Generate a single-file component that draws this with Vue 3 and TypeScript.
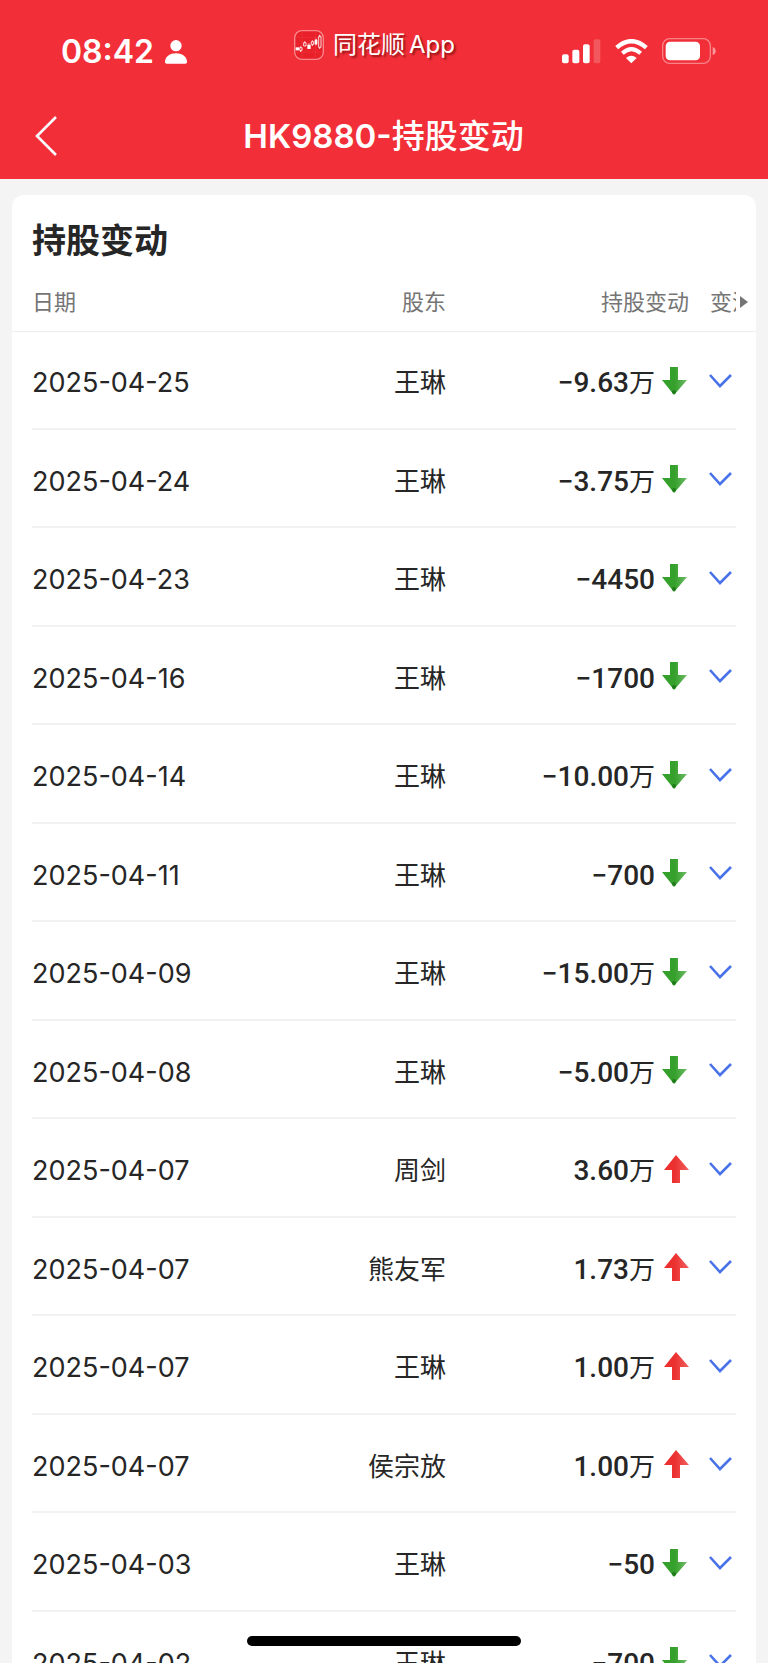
<script setup lang="ts">
interface HoldingChange {
  date: string
  holder: string
  amount: string
  unit: string
  direction: 'up' | 'down'
}

function change(date: string, holder: string, amount: string, unit: string, direction: 'up' | 'down'): HoldingChange {
  return { date, holder, amount, unit, direction }
}

const changes: HoldingChange[] = [
  change('2025-04-25', '王琳', '−9.63', '万', 'down'),
  change('2025-04-24', '王琳', '−3.75', '万', 'down'),
  change('2025-04-23', '王琳', '−4450', '', 'down'),
  change('2025-04-16', '王琳', '−1700', '', 'down'),
  change('2025-04-14', '王琳', '−10.00', '万', 'down'),
  change('2025-04-11', '王琳', '−700', '', 'down'),
  change('2025-04-09', '王琳', '−15.00', '万', 'down'),
  change('2025-04-08', '王琳', '−5.00', '万', 'down'),
  change('2025-04-07', '周剑', '3.60', '万', 'up'),
  change('2025-04-07', '熊友军', '1.73', '万', 'up'),
  change('2025-04-07', '王琳', '1.00', '万', 'up'),
  change('2025-04-07', '侯宗放', '1.00', '万', 'up'),
  change('2025-04-03', '王琳', '−50', '', 'down'),
  change('2025-04-02', '王琳', '−700', '', 'down'),
]
</script>

<template>
  <div class="page">
    <header class="top">
      <div class="status">
        <div class="clock">
          <span>08:42</span>
          <svg width="22" height="24" viewBox="0 0 66 72" fill="#fff" aria-hidden="true">
            <circle cx="33" cy="17" r="17" />
            <path d="M0 66C0 49 16 40 33 40s33 9 33 26c0 4-2 5-5 5H5c-3 0-5-1-5-5z" />
          </svg>
        </div>
        <div class="brand">
          <svg width="30" height="30" viewBox="0 0 90 90" aria-hidden="true">
            <rect x="2" y="2" width="86" height="86" rx="22" fill="#e8202a" stroke="#f9878b" stroke-width="4" />
            <path d="M4 22h82M4 66h82M24 4v82M64 4v82" stroke="#f03a42" stroke-width="1.5" />
            <g fill="#fff">
              <rect x="5" y="52" width="10" height="9" />
              <rect x="40" y="44" width="10" height="13" />
              <rect x="62" y="29" width="8" height="14" />
            </g>
            <g fill="none" stroke="#fff" stroke-width="2.5">
              <path d="M17 53h7v8h-7zM20 49v4M20 61v5" />
              <path d="M29 38h7v10h-7zM32 34v4" />
              <path d="M52 35h7v8h-7zM55 31v4M55 43v5" />
              <path d="M74 19h7v33h-7zM77 14v5M77 52v5M45 40v4M66 26v20" />
            </g>
          </svg>
          <span class="brand-name">同花顺<span class="brand-suffix">App</span></span>
        </div>
        <div class="signals">
          <svg width="39" height="25" viewBox="0 0 117 75" fill="#fff" aria-hidden="true">
            <rect x="0" y="46" width="20" height="27" rx="6" />
            <rect x="31" y="32" width="21" height="41" rx="6" />
            <rect x="63" y="16" width="20" height="57" rx="6" />
            <rect x="95" y="1" width="20" height="72" rx="6" opacity=".2" />
          </svg>
          <svg width="33" height="25" viewBox="0 0 99 75" aria-hidden="true">
            <path d="M5 26Q49-13 94 26" fill="none" stroke="#fff" stroke-width="13" />
            <path d="M22 43Q49 18 77 43" fill="none" stroke="#fff" stroke-width="12" />
            <path d="M33 57Q49 44 65 57L49 73z" fill="#fff" />
          </svg>
          <svg width="54" height="26" viewBox="0 0 162 78" aria-hidden="true">
            <rect x="2" y="2" width="143" height="74" rx="21" fill="none" stroke="#fff" stroke-opacity=".4" stroke-width="4" />
            <rect x="11" y="11" width="103" height="56" rx="13" fill="#fff" />
            <path d="M152 27q9 3 9 12t-9 12z" fill="#fff" fill-opacity=".5" />
          </svg>
        </div>
      </div>
      <div class="nav">
        <button class="back" type="button" aria-label="返回">
          <svg width="22" height="40" viewBox="0 0 22 40" fill="none" stroke="#fff" stroke-width="2.6" aria-hidden="true">
            <path d="M21 1L2 20L21 39" />
          </svg>
        </button>
        <h1><span class="code">HK9880-</span>持股变动</h1>
      </div>
    </header>

    <main class="content">
      <section class="card">
        <h2>持股变动</h2>
        <table>
          <colgroup>
            <col />
            <col />
            <col class="col-change" />
            <col class="col-more" />
          </colgroup>
          <thead>
            <tr>
              <th class="date" scope="col">日期</th>
              <th scope="col">股东</th>
              <th scope="col">持股变动</th>
              <th class="more" scope="col">
                <div class="more-head">
                  <span class="clipped">变流</span>
                  <svg width="8" height="12" viewBox="0 0 8 12" fill="#757575" aria-hidden="true">
                    <path d="M0 0L8 6L0 12z" />
                  </svg>
                </div>
              </th>
            </tr>
          </thead>
          <tbody>
            <tr v-for="(row, index) in changes" :key="index">
              <td class="date">{{ row.date }}</td>
              <td class="holder">{{ row.holder }}</td>
              <td>
                <div class="change">
                  <span class="amount">{{ row.amount }}<span class="unit">{{ row.unit }}</span></span>
                  <svg v-if="row.direction === 'down'" width="27" height="28" viewBox="0 0 27 28" aria-hidden="true">
                    <defs>
                      <linearGradient id="fall" x1="0" y1="0" x2="1" y2="0">
                        <stop offset=".5" stop-color="#35a02b" />
                        <stop offset="1" stop-color="#6dbb66" />
                      </linearGradient>
                    </defs>
                    <path d="M8 0h8v13h9L12 28L0 13h8z" fill="url(#fall)" />
                    <circle cx="12" cy="25" r="2" fill="#207a1c" />
                  </svg>
                  <svg v-else width="27" height="28" viewBox="0 0 27 28" aria-hidden="true">
                    <defs>
                      <linearGradient id="rise" x1="0" y1="0" x2="1" y2="0">
                        <stop offset=".4" stop-color="#ec2f2f" />
                        <stop offset="1" stop-color="#f0605f" />
                      </linearGradient>
                    </defs>
                    <path d="M14 0L27 15h-9v13h-8V15H2z" fill="url(#rise)" />
                  </svg>
                </div>
              </td>
              <td class="more">
                <button class="expand" type="button" aria-label="展开">
                  <svg width="24" height="14" viewBox="0 0 24 14" fill="none" stroke="#4a72e8" stroke-width="2.6" aria-hidden="true">
                    <path d="M1 1L11 12L22 1" />
                  </svg>
                </button>
              </td>
            </tr>
          </tbody>
        </table>
      </section>
    </main>
    <div class="home-indicator"></div>
  </div>
</template>

<style>
body {
  margin: 0;
}
</style>

<style scoped>
.page {
  position: relative;
  display: flex;
  flex-direction: column;
  height: 100vh;
  overflow: hidden;
  background: #f4f4f4;
  color: #262626;
  font-family: Inter, "Noto Sans CJK SC", sans-serif;
}

svg {
  display: block;
  flex: none;
}

button {
  display: block;
  margin: 0;
  padding: 0;
  border: 0;
  background: none;
}

.top {
  flex: none;
  background: #f22f38;
  color: #fff;
}

.status {
  display: flex;
  align-items: center;
  justify-content: space-between;
  box-sizing: border-box;
  height: 94px;
  padding: 8px 52px 0 61px;
}

.clock {
  display: flex;
  align-items: center;
  gap: 11px;
  padding-top: 1px;
  font-size: 32px;
  font-weight: 600;
  line-height: 40px;
}

.brand {
  display: flex;
  align-items: center;
  gap: 9px;
  padding-bottom: 12px;
  font-size: 24px;
  line-height: 30px;
  text-shadow: 2px 2px 2px rgba(90, 0, 0, 0.6);
}

.brand-suffix {
  margin-left: 4px;
}

.signals {
  display: flex;
  align-items: center;
  gap: 14px;
}

.nav {
  display: grid;
  grid-template-columns: 1fr auto 1fr;
  align-items: center;
  height: 83px;
  padding: 0 36px 2px 35px;
}

.back {
  justify-self: start;
}

h1 {
  grid-column: 2;
  margin: 0;
  font-size: 33px;
  font-weight: 500;
  line-height: 40px;
}

.code {
  font-weight: 600;
}

.content {
  flex: 1;
  min-height: 0;
  overflow: hidden;
  padding: 16px 12px 0;
}

.card {
  overflow: hidden;
  border-radius: 12px;
  background: #fff;
}

h2 {
  margin: 0;
  padding: 26px 20px 0;
  font-size: 34px;
  font-weight: 700;
  line-height: 40px;
}

table {
  width: 100%;
  border-collapse: collapse;
  table-layout: fixed;
}

.col-change {
  width: 243px;
}

.col-more {
  width: 67px;
}

th {
  height: 70px;
  padding: 12px 0 0;
  box-sizing: border-box;
  border-bottom: 1px solid #ededed;
  color: #757575;
  font-size: 22px;
  font-weight: 400;
  line-height: 30px;
  text-align: right;
}

tbody tr {
  height: 98px;
  background: linear-gradient(#f2f2f2, #f2f2f2) bottom / calc(100% - 40px) 2px no-repeat;
}

tbody tr:nth-child(odd) {
  height: 99px;
}

td {
  padding: 0;
  font-size: 26px;
  line-height: 36px;
  text-align: right;
}

.date {
  padding-left: 20px;
  text-align: left;
}

td.date {
  padding-top: 5px;
  font-size: 27px;
}

td.holder {
  padding-top: 5px;
}

.more {
  padding-left: 21px;
  text-align: left;
}

td.more {
  padding-left: 20px;
}

.more-head {
  display: flex;
  align-items: center;
  gap: 4px;
}

.clipped {
  width: 26px;
  overflow: hidden;
  white-space: nowrap;
}

.change {
  display: flex;
  align-items: center;
  justify-content: flex-end;
  gap: 7px;
}

.amount {
  padding-top: 5px;
  font-family: Roboto, "Noto Sans CJK SC", sans-serif;
  font-size: 28px;
  font-weight: 500;
}

.unit {
  font-size: 26px;
  font-weight: 400;
}

.home-indicator {
  position: absolute;
  bottom: 17px;
  left: 50%;
  width: 274px;
  height: 10px;
  border-radius: 5px;
  background: #000;
  transform: translateX(-50%);
}
</style>
